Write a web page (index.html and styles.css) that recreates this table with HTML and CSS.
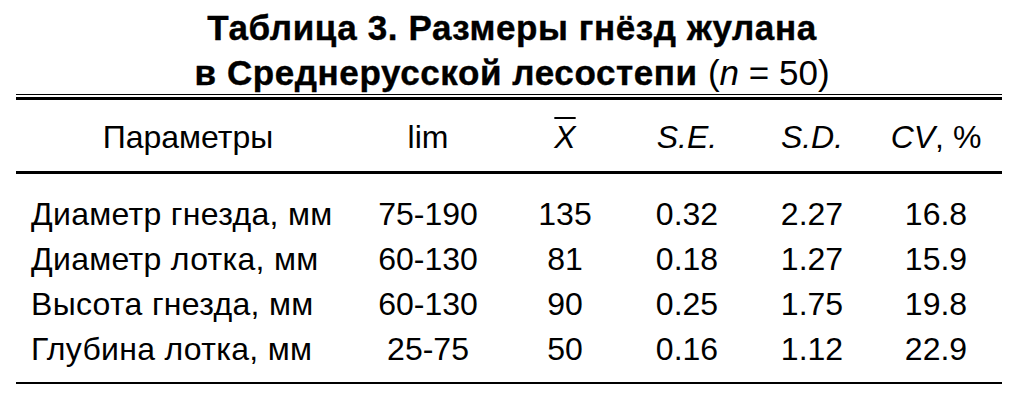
FILE: index.html
```
<!DOCTYPE html>
<html lang="ru">
<head>
<meta charset="utf-8">
<title>Таблица 3</title>
<link rel="stylesheet" href="styles.css">
</head>
<body>
<div class="page">
  <h1 class="title">
    <span class="title-line">Таблица 3. Размеры гнёзд жулана</span>
    <span class="title-line">в Среднерусской лесостепи <span class="title-n">(<i>n</i> = 50)</span></span>
  </h1>
  <div class="table">
    <div class="rule-double"></div>
    <div class="row head">
      <div class="cell first">Параметры</div>
      <div class="cell">lim</div>
      <div class="cell"><i class="xbar">X</i></div>
      <div class="cell"><i>S.E.</i></div>
      <div class="cell"><i>S.D.</i></div>
      <div class="cell"><i>CV</i>, %</div>
    </div>
    <div class="body">
      <div class="row">
        <div class="cell first">Диаметр гнезда, мм</div>
        <div class="cell">75-190</div>
        <div class="cell">135</div>
        <div class="cell">0.32</div>
        <div class="cell">2.27</div>
        <div class="cell">16.8</div>
      </div>
      <div class="row">
        <div class="cell first">Диаметр лотка, мм</div>
        <div class="cell">60-130</div>
        <div class="cell">81</div>
        <div class="cell">0.18</div>
        <div class="cell">1.27</div>
        <div class="cell">15.9</div>
      </div>
      <div class="row">
        <div class="cell first">Высота гнезда, мм</div>
        <div class="cell">60-130</div>
        <div class="cell">90</div>
        <div class="cell">0.25</div>
        <div class="cell">1.75</div>
        <div class="cell">19.8</div>
      </div>
      <div class="row">
        <div class="cell first">Глубина лотка, мм</div>
        <div class="cell">25-75</div>
        <div class="cell">50</div>
        <div class="cell">0.16</div>
        <div class="cell">1.12</div>
        <div class="cell">22.9</div>
      </div>
    </div>
  </div>
</div>
</body>
</html>
```
FILE: styles.css
```
html, body {
  margin: 0;
  padding: 0;
  background: #fff;
}
body {
  width: 1024px;
  height: 400px;
  overflow: hidden;
  color: #000;
  font-family: "Liberation Sans", Arial, sans-serif;
}
.title {
  margin: 0;
  padding-top: 5px;
  text-align: center;
  font-size: 35px;
  font-weight: bold;
  line-height: 45px;
  letter-spacing: 0.6px;
  -webkit-text-stroke: 0.4px #000;
}
.title-line {
  display: block;
}
.title-n {
  font-weight: normal;
  letter-spacing: 0;
  -webkit-text-stroke: 0;
}
.table {
  margin-top: -1px;
  margin-left: 16px;
  width: 986px;
}
.rule-double {
  height: 2px;
  border-top: 1px solid #000;
  border-bottom: 3px solid #000;
}
.row {
  display: grid;
  grid-template-columns: 344px 136px 138px 106px 144px 104px;
  font-size: 32px;
}
.cell {
  text-align: center;
  white-space: nowrap;
}
.head {
  line-height: 38px;
  padding: 18px 0 15px;
  border-bottom: 3px solid #000;
}
.body {
  padding: 18px 0 10px;
  border-bottom: 2px solid #000;
}
.body .row {
  line-height: 45px;
}
.body .first {
  text-align: left;
  padding-left: 15px;
  letter-spacing: 0.3px;
}
.xbar {
  text-decoration: overline;
  text-decoration-thickness: 2px;
}
```
